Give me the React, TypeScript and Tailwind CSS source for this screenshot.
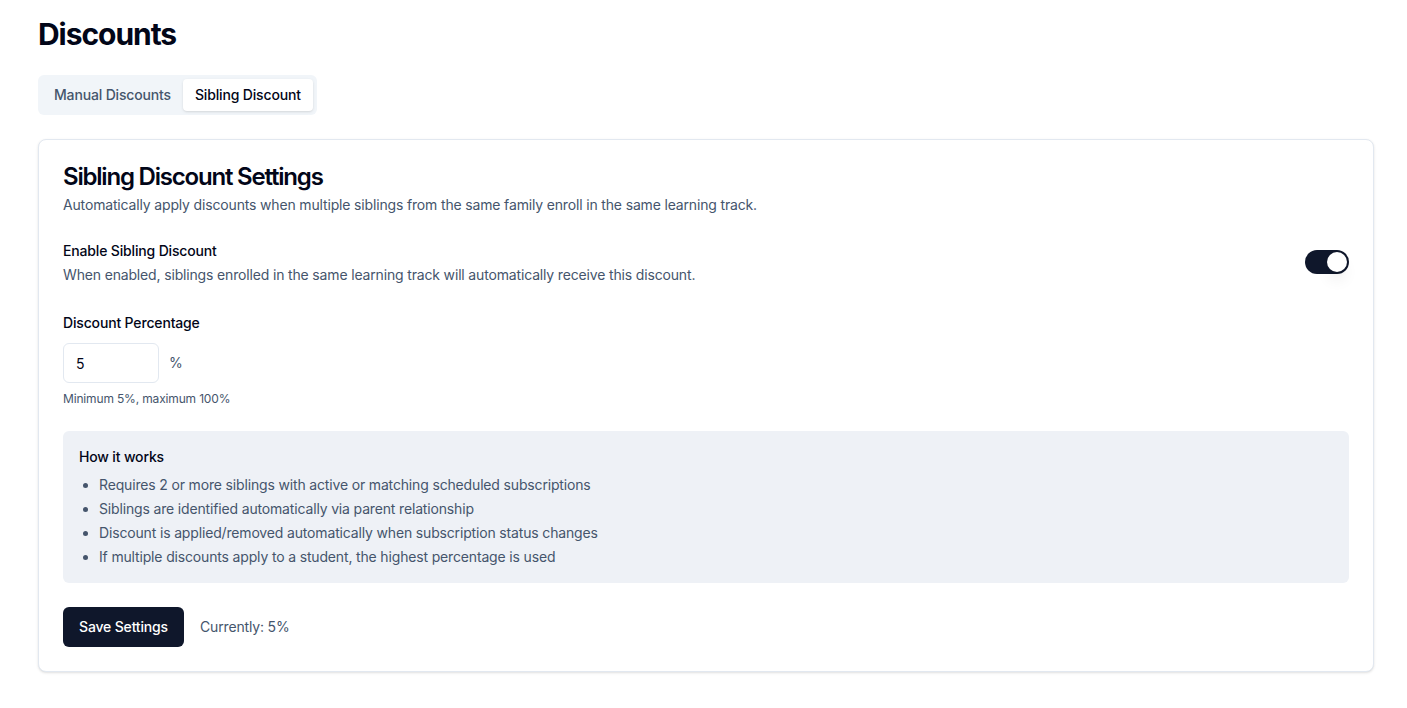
import React, { useState } from "react";

export default function App() {
  const [enabled, setEnabled] = useState(true);
  const [tab, setTab] = useState("sibling");
  return (
    <div
      className="min-h-screen bg-white text-slate-950 pl-[38px] pr-[33px] pt-4 pb-8 tracking-[-0.01em]"
      style={{ fontFamily: "Inter, 'Noto Sans', sans-serif" }}
    >
      <h1 className="text-3xl font-bold tracking-[-0.035em] leading-9">Discounts</h1>

      <div className="mt-[23px] inline-flex h-10 items-center rounded-md bg-slate-100 p-1 text-slate-500">
        <button
          onClick={() => setTab("manual")}
          className={`inline-flex h-8 items-center rounded-sm px-3 text-sm font-medium ${
            tab === "manual" ? "bg-white text-slate-950 shadow-sm" : "text-slate-600"
          }`}
        >
          Manual Discounts
        </button>
        <button
          onClick={() => setTab("sibling")}
          className={`inline-flex h-8 items-center rounded-sm px-3 text-sm font-medium ${
            tab === "sibling" ? "bg-white text-slate-950 shadow-sm" : "text-slate-600"
          }`}
        >
          Sibling Discount
        </button>
      </div>

      <div className="mt-6 rounded-lg border border-slate-200 bg-white shadow-sm">
        <div className="flex flex-col gap-1.5 px-6 pb-6 pt-[25px]">
          <h2 className="text-2xl font-semibold leading-none tracking-[-0.05em]">
            Sibling Discount Settings
          </h2>
          <p className="text-sm text-slate-600">
            Automatically apply discounts when multiple siblings from the same family enroll in the same learning track.
          </p>
        </div>

        <div className="px-6 pb-6 pt-[2px]">
          <div className="flex items-center justify-between">
            <div className="flex flex-col gap-1">
              <span className="text-sm font-medium leading-5">Enable Sibling Discount</span>
              <span className="text-sm text-slate-600">
                When enabled, siblings enrolled in the same learning track will automatically receive this discount.
              </span>
            </div>
            <button
              onClick={() => setEnabled(!enabled)}
              className={`relative -mt-[3px] inline-flex h-6 w-11 shrink-0 items-center rounded-full border-2 border-transparent ${
                enabled ? "bg-slate-900" : "bg-slate-200"
              }`}
            >
              <span
                className={`block h-5 w-5 rounded-full bg-white shadow-lg ${
                  enabled ? "translate-x-5" : "translate-x-0"
                }`}
              />
            </button>
          </div>

          <div className="mt-7 flex flex-col">
            <label className="text-sm font-medium leading-5">Discount Percentage</label>
            <div className="mt-2.5 flex items-center gap-2.5">
              <input
                defaultValue="5"
                className="h-10 w-24 rounded-md border border-slate-200 bg-white px-3 text-sm text-slate-950 outline-none"
              />
              <span className="text-sm text-slate-600">%</span>
            </div>
            <p className="mt-2 text-xs text-slate-600">Minimum 5%, maximum 100%</p>
          </div>

          <div className="mt-6 rounded-md bg-[#eef1f6] p-4">
            <p className="text-sm font-medium leading-5">How it works</p>
            <ul className="mt-2 list-disc pl-5 text-sm text-slate-600 space-y-1">
              <li>Requires 2 or more siblings with active or matching scheduled subscriptions</li>
              <li>Siblings are identified automatically via parent relationship</li>
              <li>Discount is applied/removed automatically when subscription status changes</li>
              <li>If multiple discounts apply to a student, the highest percentage is used</li>
            </ul>
          </div>

          <div className="mt-6 flex items-center gap-4">
            <button className="inline-flex h-10 items-center rounded-md bg-slate-900 px-4 text-sm font-medium text-white">
              Save Settings
            </button>
            <span className="text-sm text-slate-600">Currently: 5%</span>
          </div>
        </div>
      </div>
    </div>
  );
}
